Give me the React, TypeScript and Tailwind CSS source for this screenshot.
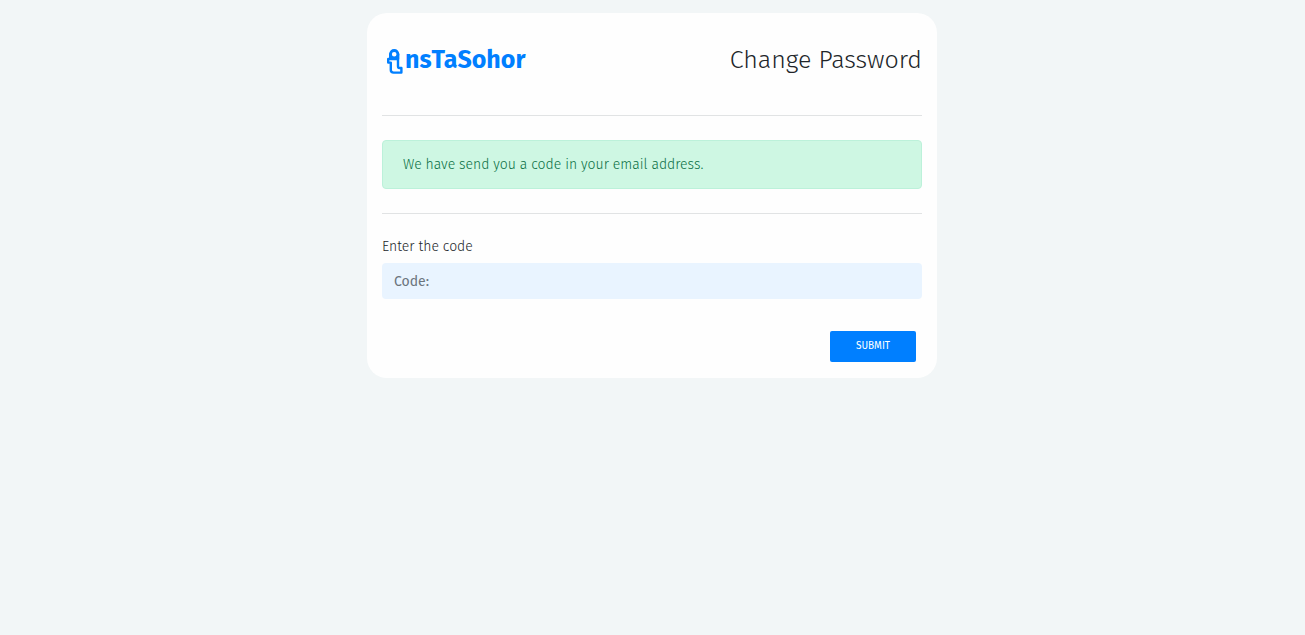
import React from "react";

function LogoMark() {
  return (
    <svg
      aria-hidden="true"
      className="mt-1 h-[26px] w-[18px] shrink-0"
      viewBox="0 0 18 26"
      fill="none"
      stroke="currentColor"
      strokeWidth="2.8"
      strokeLinejoin="round"
      strokeLinecap="round"
    >
      <circle cx="8.2" cy="5.2" r="3.7" />
      <path d="M4.2 5.2V9.4M12.2 5.2V9.4" strokeWidth="2.4" />
      <path d="M2.2 10H12V17.2C12 18.6 12.4 19 13.4 19H15.4V23.6H7.6C5.6 23.6 4.8 23 4.8 21V13.6H2.2V10Z" strokeWidth="2.4" />
    </svg>
  );
}

export default function App() {
  return (
    <div className="min-h-screen bg-[#f2f6f7] py-[13px] pr-4 pl-[15px] font-['Fira_Sans','Noto_Sans',sans-serif]">
      <main className="mx-auto w-full max-w-[570px] rounded-[20px] bg-[#fefefe] px-[15px] pb-4">
        <header className="flex h-[102px] items-center justify-between gap-4 pb-2 text-[25px] leading-10">
          <a href="#" className="flex items-center gap-px pl-1 text-[#007fff]">
            <LogoMark />
            <span className="font-bold">nsTaSohor</span>
          </a>
          <h1 className="font-light text-[#212529]">Change Password</h1>
        </header>
        <hr className="border-t border-[#e1e3e4]" />
        <p
          role="status"
          className="my-6 rounded-[4px] border border-[#bcf1da] bg-[#cef7e3] px-5 py-3 text-sm leading-[23px] font-light text-[#0b7045]"
        >
          We have send you a code in your email address.
        </p>
        <hr className="border-t border-[#e1e3e4]" />
        <form className="pt-5" onSubmit={(event) => event.preventDefault()}>
          <label htmlFor="code" className="mb-1 block text-sm leading-[25px] font-light text-[#212529]">
            Enter the code
          </label>
          <input
            id="code"
            type="text"
            placeholder="Code:"
            className="block h-9 w-full rounded-[4px] bg-[#e9f4ff] px-3 text-sm text-[#495057] outline-none placeholder:text-[#6c757d]"
          />
          <div className="mt-8 flex justify-end pr-1.5">
            <button
              type="submit"
              className="h-[31px] w-[86px] rounded-[2px] bg-[#007fff] text-[10px] text-white uppercase"
            >
              Submit
            </button>
          </div>
        </form>
      </main>
    </div>
  );
}
